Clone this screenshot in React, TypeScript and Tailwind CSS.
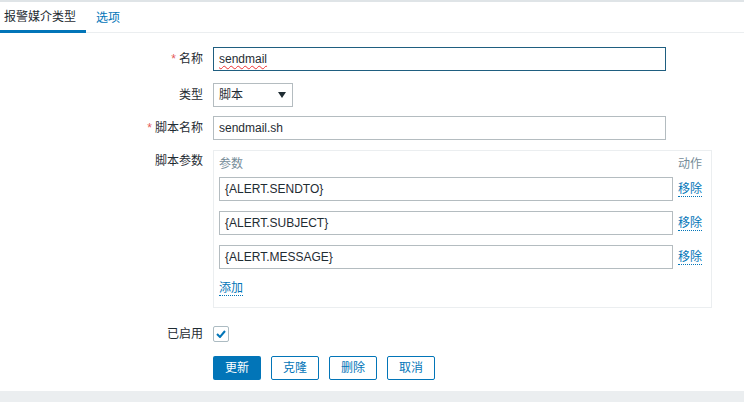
import React from "react";

const FONT = "font-['Liberation_Sans','Noto_Sans_CJK_SC',sans-serif]";

function Label({ text, required }: { text: string; required?: boolean }) {
  return (
    <div className="w-[203px] shrink-0 text-right text-[12px] text-[#1f2c33] leading-[14px]">
      {required && <span className="text-[#e45959] mr-[3px]">*</span>}
      {text}
    </div>
  );
}

function TextBox({ value, focused, wavy }: { value: string; focused?: boolean; wavy?: boolean }) {
  return (
    <div
      className={`h-[24px] flex items-center px-[5px] bg-white border text-[12px] text-[#1f2c33] ${
        focused ? "border-[#1f5e80]" : "border-[#b4bcc0]"
      }`}
    >
      <span className={wavy ? "underline decoration-wavy decoration-[#e33] decoration-1 underline-offset-2" : ""}>
        {value}
      </span>
    </div>
  );
}

function DotLink({ children }: { children: React.ReactNode }) {
  return (
    <span className="text-[12px] leading-[14px] text-[#0275b8] border-b border-dotted border-[#0275b8]">
      {children}
    </span>
  );
}

const params = ["{ALERT.SENDTO}", "{ALERT.SUBJECT}", "{ALERT.MESSAGE}"];

export default function App() {
  return (
    <div className={`w-[744px] h-[402px] bg-white flex flex-col overflow-hidden ${FONT}`}>
      <div className="h-[2px] bg-[#dfe4e7]" />

      {/* tabs */}
      <div className="flex h-[31px] border-b border-[#ebeef0]">
        <div className="w-[86px] pl-[4px] flex items-center text-[12px] text-[#1f2c33] border-b-[3px] border-[#0275b8] mb-[-1px] pt-[2px]">
          报警媒介类型
        </div>
        <div className="pl-[10px] flex items-center text-[12px] text-[#0275b8] pt-[2px]">选项</div>
      </div>

      {/* form */}
      <div className="flex-1 pt-[14px]">
        <div className="flex items-center">
          <Label text="名称" required />
          <div className="ml-[10px] w-[453px]">
            <TextBox value="sendmail" focused wavy />
          </div>
        </div>

        <div className="flex items-center mt-[12px]">
          <Label text="类型" />
          <div className="ml-[10px] w-[80px] h-[24px] border border-[#b4bcc0] flex items-center justify-between pl-[5px] pr-[6px] text-[12px] text-[#1f2c33]">
            <span>脚本</span>
            <svg width="8" height="6" viewBox="0 0 8 6">
              <path d="M0 0 L8 0 L4 6 Z" fill="#1f2c33" />
            </svg>
          </div>
        </div>

        <div className="flex items-center mt-[9px]">
          <Label text="脚本名称" required />
          <div className="ml-[10px] w-[453px]">
            <TextBox value="sendmail.sh" />
          </div>
        </div>

        <div className="flex items-start mt-[10px]">
          <div className="pt-[4px]">
            <Label text="脚本参数" />
          </div>
          <div className="ml-[10px] w-[499px] border border-[#ebeef0] pt-[6px] pb-[11px] pl-[5px] pr-[9px]">
            <div className="grid grid-cols-[1fr_24px] gap-x-[5px] items-center text-[12px] leading-[14px]">
              <div className="h-[14px] text-[#768d99]">参数</div>
              <div className="h-[14px] text-[#768d99] text-right">动作</div>
              {params.map((p, i) => (
                <React.Fragment key={p}>
                  <div className={i === 0 ? "mt-[6px]" : "mt-[10px]"}>
                    <TextBox value={p} />
                  </div>
                  <div className={`${i === 0 ? "mt-[6px]" : "mt-[10px]"} h-[15px]`}>
                    <DotLink>移除</DotLink>
                  </div>
                </React.Fragment>
              ))}
            </div>
            <div className="mt-[12px] h-[15px] text-[12px] leading-[14px]">
              <DotLink>添加</DotLink>
            </div>
          </div>
        </div>

        <div className="flex items-center mt-[18px]">
          <Label text="已启用" />
          <div className="ml-[10px] w-[16px] h-[16px] border border-[#acbbc2] rounded-[2px] flex items-center justify-center bg-white">
            <svg width="10" height="8" viewBox="0 0 10 8">
              <path d="M1 4 L4 7 L9 1" fill="none" stroke="#0275b8" strokeWidth="2" />
            </svg>
          </div>
        </div>

        <div className="flex mt-[14px] ml-[213px] gap-[10px]">
          <button className="w-[48px] h-[24px] rounded-[2px] bg-[#0275b8] text-white text-[12px]">更新</button>
          <button className="w-[48px] h-[24px] rounded-[2px] border border-[#0275b8] text-[#0275b8] bg-white text-[12px]">克隆</button>
          <button className="w-[48px] h-[24px] rounded-[2px] border border-[#0275b8] text-[#0275b8] bg-white text-[12px]">删除</button>
          <button className="w-[48px] h-[24px] rounded-[2px] border border-[#0275b8] text-[#0275b8] bg-white text-[12px]">取消</button>
        </div>
      </div>

      <div className="h-[11px] bg-[#ebeef0]" />
    </div>
  );
}
